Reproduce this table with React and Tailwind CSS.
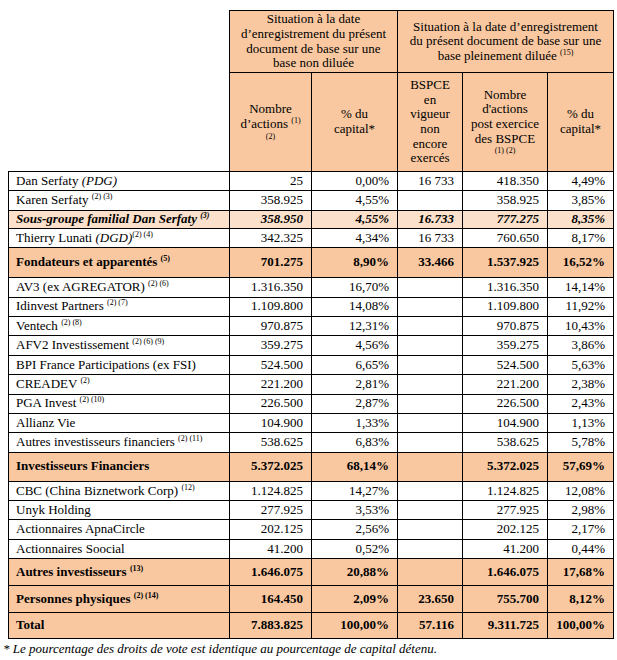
import React from 'react';

const ORANGE = 'bg-[#f9c8a0]';

const rows = [
  { name: 'Dan Serfaty', it: '(PDG)', v: ['25', '0,00%', '16 733', '418.350', '4,49%'] },
  { name: 'Karen Serfaty', sup: '(2) (3)', v: ['358.925', '4,55%', '', '358.925', '3,85%'] },
  { name: 'Sous-groupe familial Dan Serfaty', sup: '(3)', kind: 'sub', h: 'h-[18px]', v: ['358.950', '4,55%', '16.733', '777.275', '8,35%'] },
  { name: 'Thierry Lunati', it: '(DGD)', sup: '(2) (4)', tight: true, v: ['342.325', '4,34%', '16 733', '760.650', '8,17%'] },
  { name: 'Fondateurs et apparentés', sup: '(5)', kind: 'total', h: 'h-[30px]', v: ['701.275', '8,90%', '33.466', '1.537.925', '16,52%'] },
  { name: 'AV3 (ex AGREGATOR)', sup: '(2) (6)', v: ['1.316.350', '16,70%', '', '1.316.350', '14,14%'] },
  { name: 'Idinvest Partners', sup: '(2) (7)', v: ['1.109.800', '14,08%', '', '1.109.800', '11,92%'] },
  { name: 'Ventech', sup: '(2) (8)', v: ['970.875', '12,31%', '', '970.875', '10,43%'] },
  { name: 'AFV2 Investissement', sup: '(2) (6) (9)', v: ['359.275', '4,56%', '', '359.275', '3,86%'] },
  { name: 'BPI France Participations (ex FSI)', v: ['524.500', '6,65%', '', '524.500', '5,63%'] },
  { name: 'CREADEV', sup: '(2)', v: ['221.200', '2,81%', '', '221.200', '2,38%'] },
  { name: 'PGA Invest', sup: '(2) (10)', v: ['226.500', '2,87%', '', '226.500', '2,43%'] },
  { name: 'Allianz Vie', v: ['104.900', '1,33%', '', '104.900', '1,13%'] },
  { name: 'Autres investisseurs financiers', sup: '(2) (11)', v: ['538.625', '6,83%', '', '538.625', '5,78%'] },
  { name: 'Investisseurs Financiers', kind: 'total', h: 'h-[29px]', v: ['5.372.025', '68,14%', '', '5.372.025', '57,69%'] },
  { name: 'CBC (China Biznetwork Corp)', sup: '(12)', v: ['1.124.825', '14,27%', '', '1.124.825', '12,08%'] },
  { name: 'Unyk Holding', v: ['277.925', '3,53%', '', '277.925', '2,98%'] },
  { name: 'Actionnaires ApnaCircle', v: ['202.125', '2,56%', '', '202.125', '2,17%'] },
  { name: 'Actionnaires Soocial', v: ['41.200', '0,52%', '', '41.200', '0,44%'] },
  { name: 'Autres investisseurs', sup: '(13)', kind: 'total', h: 'h-[27px]', v: ['1.646.075', '20,88%', '', '1.646.075', '17,68%'] },
  { name: 'Personnes physiques', sup: '(2) (14)', kind: 'total', h: 'h-[27px]', v: ['164.450', '2,09%', '23.650', '755.700', '8,12%'] },
  { name: 'Total', kind: 'total', h: 'h-[26px]', v: ['7.883.825', '100,00%', '57.116', '9.311.725', '100,00%'] },
];

function Sup({ children }) {
  return <sup className="text-[8px] top-[-5px] leading-none">{children}</sup>;
}

function Row({ row }) {
  const bg = row.kind === 'total' ? ORANGE : row.kind === 'sub' ? 'bg-[#fbe1cb]' : 'bg-white';
  const weight = row.kind === 'total' ? 'font-bold' : row.kind === 'sub' ? 'font-bold italic' : '';
  return (
    <tr className={`${row.h || 'h-[19.4px]'} ${bg} ${weight}`}>
      <td className="border border-black pl-[7px] pr-1 align-middle whitespace-nowrap">
        {row.name}
        {row.it && <span className="italic"> {row.it}</span>}
        {row.sup && <>{row.tight ? '' : ' '}<Sup>{row.sup}</Sup></>}
      </td>
      {row.v.map((val, i) => (
        <td key={i} className="border border-black pr-[8px] text-right align-middle whitespace-nowrap">
          {val}
        </td>
      ))}
    </tr>
  );
}

export default function App() {
  return (
    <div className="bg-white w-[617px] h-[660px] text-black text-[13px] leading-[14.6px] font-['Liberation_Serif','Times_New_Roman',serif]">
      <div className="pt-[10px] pl-[8px]">
        <table className="table-fixed border-collapse w-[605px]">
          <colgroup>
            <col className="w-[221px]" />
            <col className="w-[82px]" />
            <col className="w-[86px]" />
            <col className="w-[65px]" />
            <col className="w-[85px]" />
            <col className="w-[66px]" />
          </colgroup>
          <thead>
            <tr className="h-[62px]">
              <th rowSpan={2} className="bg-white"></th>
              <th colSpan={2} className={`${ORANGE} border border-black font-normal text-center align-middle px-1`}>
                Situation à la date<br />d’enregistrement du présent<br />document de base sur une<br />base non diluée
              </th>
              <th colSpan={3} className={`${ORANGE} border border-black font-normal text-center align-middle px-1 whitespace-nowrap`}>
                Situation à la date d’enregistrement<br />du présent document de base sur une<br />base pleinement diluée <Sup>(15)</Sup>
              </th>
            </tr>
            <tr className="h-[99px]">
              <th className={`${ORANGE} border border-black font-normal text-center align-middle px-1`}>
                Nombre<br />d’actions <Sup>(1)</Sup><br /><span className="text-[8px] leading-[10px] block">(2)</span>
              </th>
              <th className={`${ORANGE} border border-black font-normal text-center align-middle px-1`}>
                % du<br />capital*
              </th>
              <th className={`${ORANGE} border border-black font-normal text-center align-middle px-1`}>
                BSPCE<br />en<br />vigueur<br />non<br />encore<br />exercés
              </th>
              <th className={`${ORANGE} border border-black font-normal text-center align-middle px-1`}>
                Nombre<br />d'actions<br />post exercice<br />des BSPCE<br /><span className="text-[8px] leading-[10px] block">(1) (2)</span>
              </th>
              <th className={`${ORANGE} border border-black font-normal text-center align-middle px-1`}>
                % du<br />capital*
              </th>
            </tr>
          </thead>
          <tbody>
            {rows.map((r) => (
              <Row key={r.name} row={r} />
            ))}
          </tbody>
        </table>
      </div>
      <p className="italic pl-[3px] pt-[3px]">
        * Le pourcentage des droits de vote est identique au pourcentage de capital détenu.
      </p>
    </div>
  );
}
